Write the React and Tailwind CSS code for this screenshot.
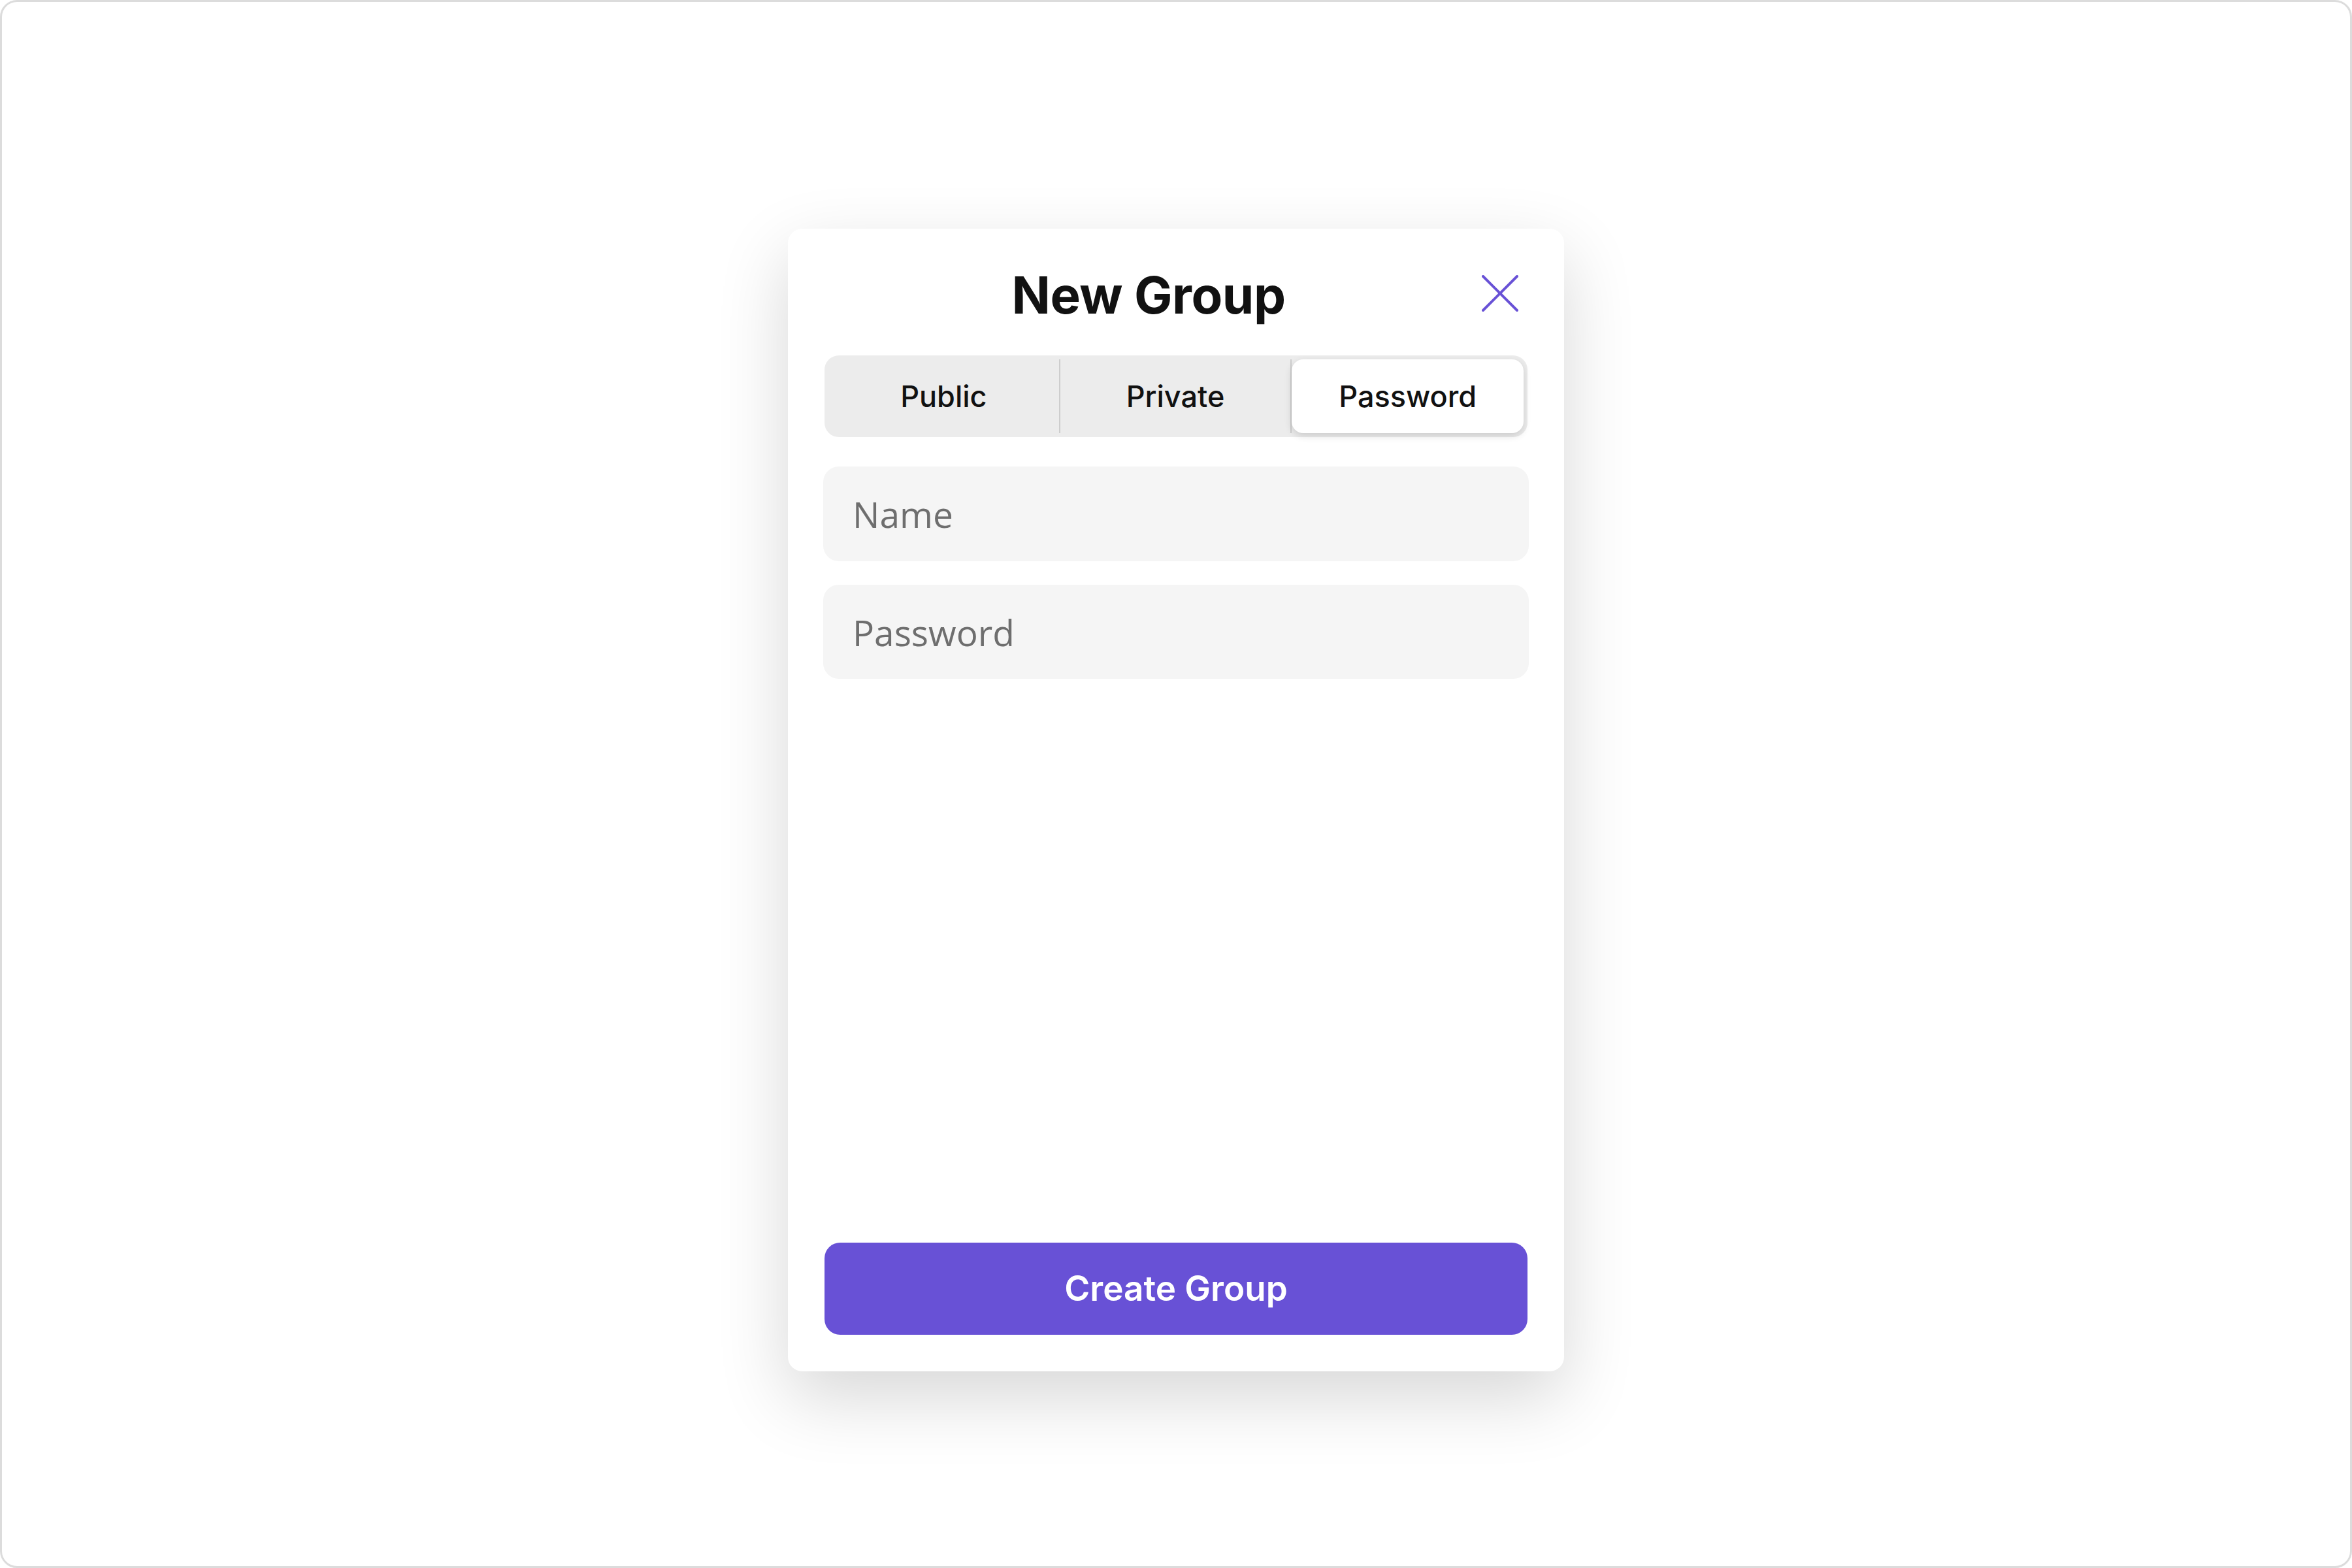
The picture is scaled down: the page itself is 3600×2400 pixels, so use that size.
import React, { useState } from 'react';

const tabs = ['Public', 'Private', 'Password'];

export default function App() {
  const [mode, setMode] = useState('Password');

  return (
    <div className="w-[3600px] h-[2400px] bg-white border-[3px] border-[#dcdcdc] rounded-[26px] flex justify-center items-start pt-[347px] font-['Inter',sans-serif]">
      <div className="w-[1188px] h-[1749px] bg-white rounded-[22px] shadow-[0_40px_110px_rgba(0,0,0,0.16)] p-[56px] flex flex-col">
        {/* Header */}
        <div className="flex items-center">
          <h1 className="flex-1 text-center text-[78px] leading-[91px] font-bold text-[#111111] tracking-[-0.5px]">
            New Group
          </h1>
          <button className="w-[84px] h-[91px] flex items-center justify-center -mt-[6px]">
            <svg width="56" height="56" viewBox="0 0 56 56" fill="none">
              <path d="M2 2L54 54M54 2L2 54" stroke="#6851D6" strokeWidth="4" strokeLinecap="round" />
            </svg>
          </button>
        </div>

        {/* Segmented control */}
        <div className="mt-[47px] h-[125px] bg-[#ececec] rounded-[22px] p-[6px] flex">
          {tabs.map((t, i) => {
            const active = mode === t;
            return (
              <div key={t} className="flex-1 flex">
                <button
                  onClick={() => setMode(t)}
                  className={`flex-1 rounded-[18px] text-[45px] font-medium text-[#111111] ${
                    active ? 'bg-white shadow-[0_4px_12px_rgba(0,0,0,0.14)]' : ''
                  }`}
                >
                  {t}
                </button>
                {i < tabs.length - 1 && !active && <div className="w-[2px] bg-[#cdcdcd]"></div>}
              </div>
            );
          })}
        </div>

        {/* Inputs */}
        <div className="mt-[45px] -mx-[2px] flex flex-col gap-[36px]">
          <input
            placeholder="Name"
            className="h-[145px] w-full bg-[#f5f5f5] rounded-[24px] px-[45px] text-[55px] font-['Open_Sans',sans-serif] text-[#333] placeholder:text-[#6e6e6e] outline-none"
          />
          <input
            type="password"
            placeholder="Password"
            className="h-[144px] w-full bg-[#f5f5f5] rounded-[24px] px-[45px] text-[55px] font-['Open_Sans',sans-serif] text-[#333] placeholder:text-[#6e6e6e] outline-none"
          />
        </div>

        <div className="flex-1"></div>

        <button className="h-[141px] w-full bg-[#6851d6] rounded-[24px] text-white text-[53px] font-semibold">
          Create Group
        </button>
      </div>
    </div>
  );
}
